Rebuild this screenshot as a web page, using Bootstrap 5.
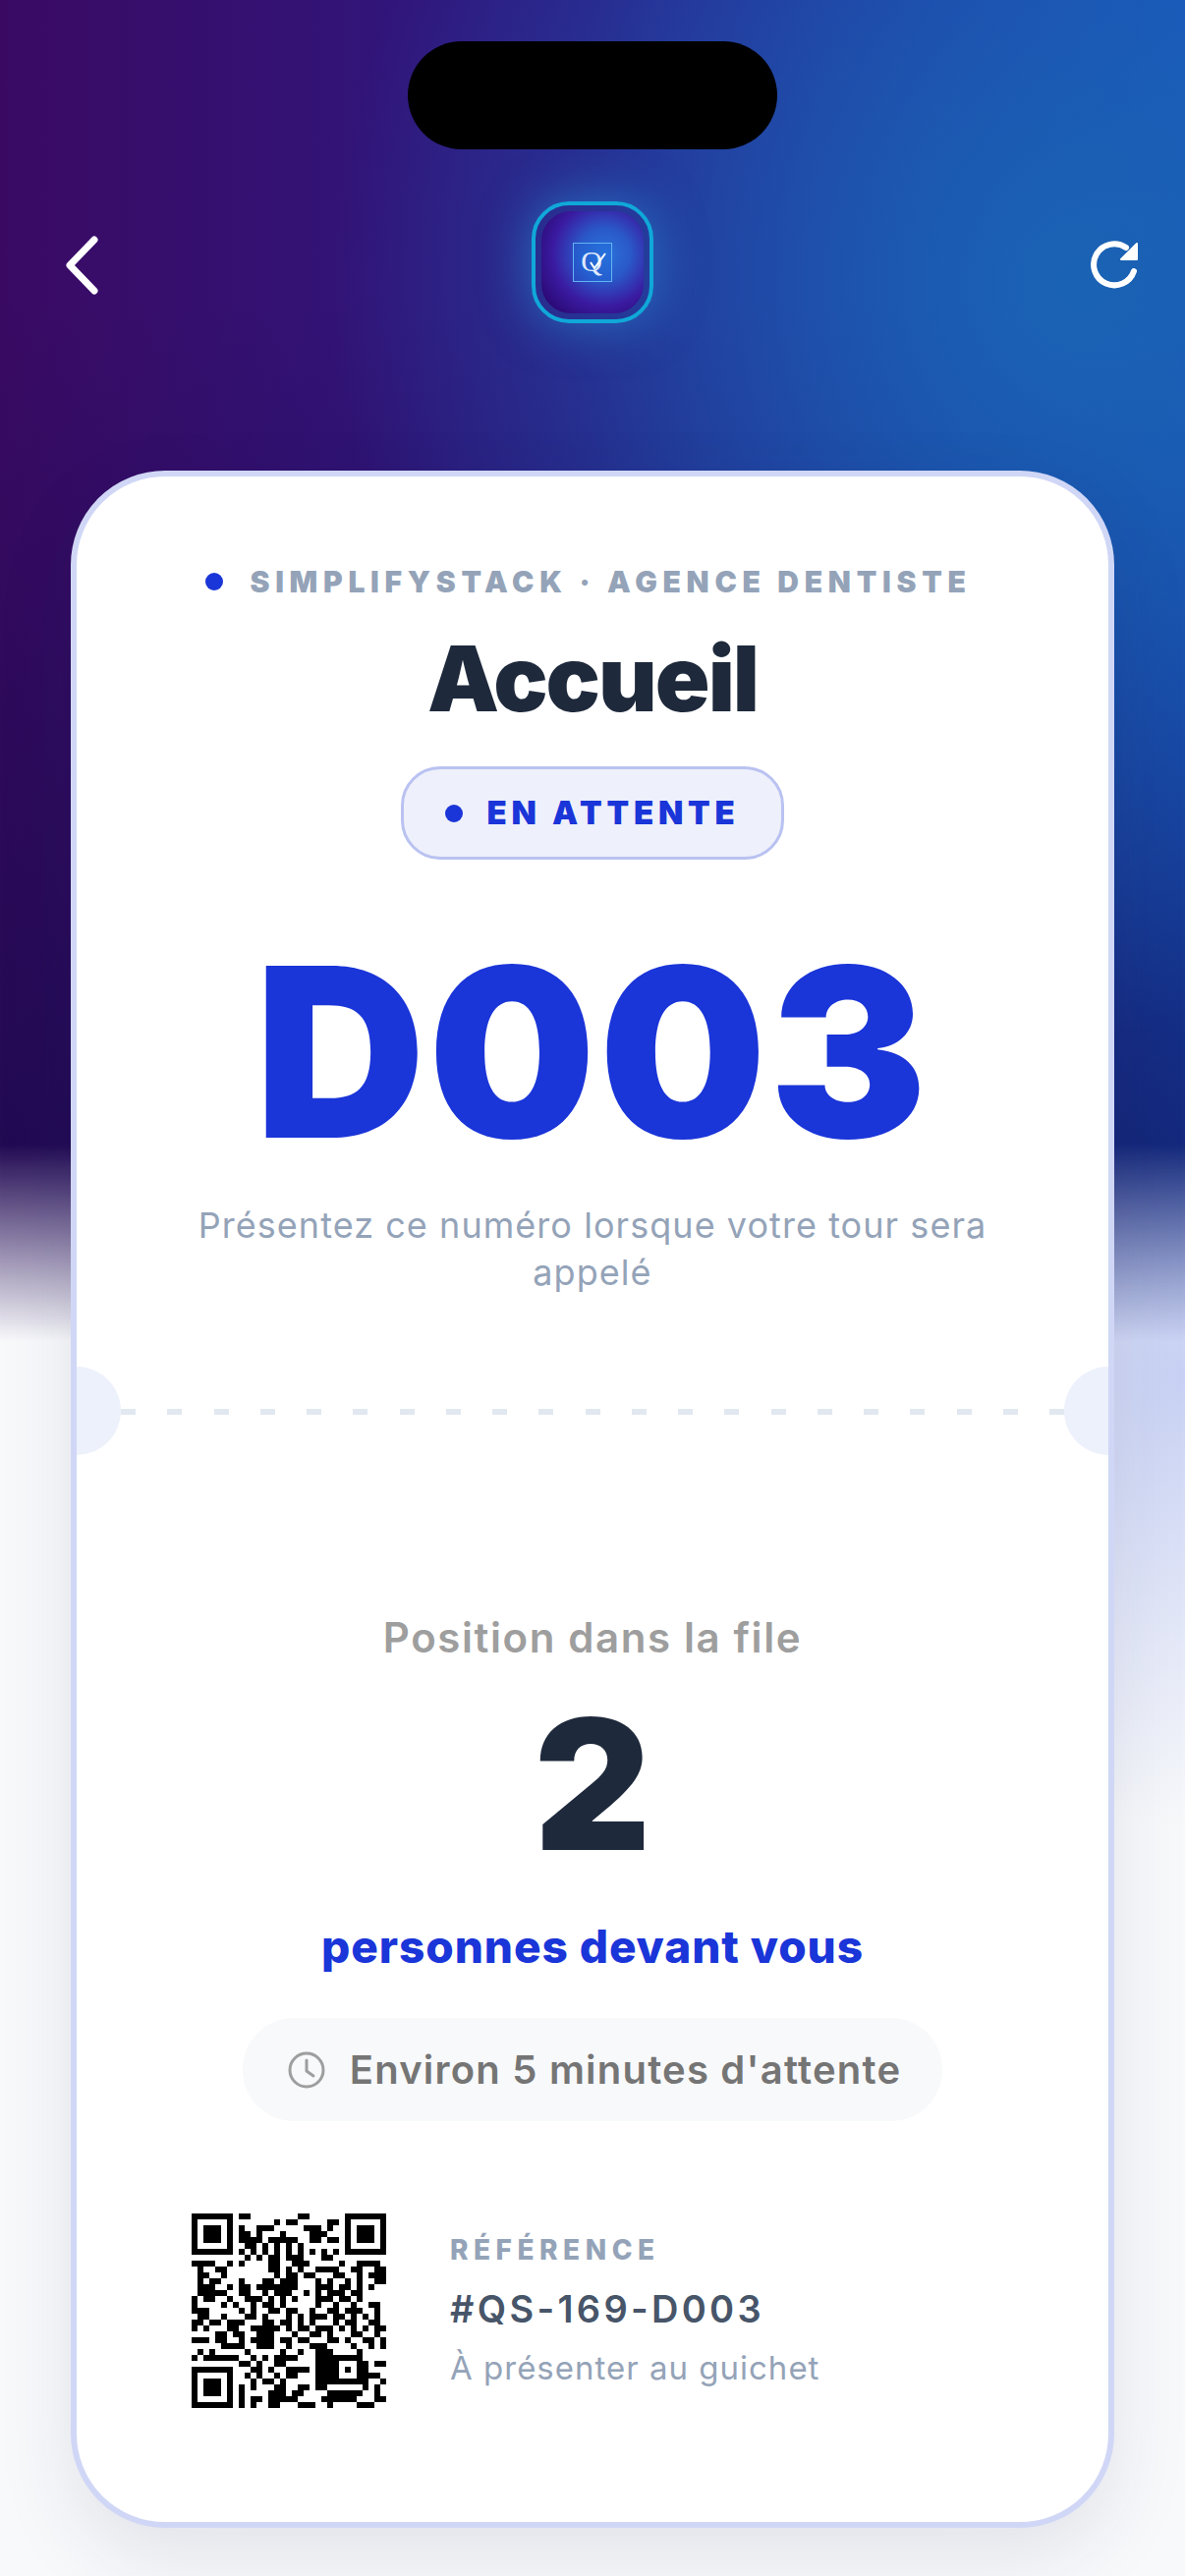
<!DOCTYPE html>
<html lang="fr">
<head>
    <meta charset="UTF-8">
    <meta name="viewport" content="width=device-width, initial-scale=1.0">
    <title>Ticket D003</title>
    <link href="https://cdn.jsdelivr.net/npm/bootstrap@5.3.0/dist/css/bootstrap.min.css" rel="stylesheet">
    <style>
        body {
            font-family: Inter, "Liberation Sans", sans-serif;
            background: radial-gradient(ellipse 420px 460px at 1206px 1400px, #c8d1f4, rgba(200,209,244,0)), #f8f9fb;
            min-height: 100vh;
            overflow: hidden;
        }
        .hero-bg {
            position: absolute;
            inset: 0 0 auto 0;
            height: 1380px;
            background:
                radial-gradient(circle 760px at 1100px 290px, #1a63b4 0, rgba(26,99,180,.55) 45%, rgba(26,99,180,0) 100%),
                linear-gradient(180deg, rgba(15,10,70,0) 300px, rgba(15,10,70,.55) 1160px),
                linear-gradient(90deg, #3a0a63 0, #2d1a85 50%, #1a50c0 100%);
            -webkit-mask-image: linear-gradient(#000 1165px, transparent 1365px);
            mask-image: linear-gradient(#000 1165px, transparent 1365px);
        }
        .page-wrap { position: relative; padding: 42px 72px 0; }
        .island { width: 376px; height: 110px; border-radius: 55px; background: #000; margin: 0 auto 53px; }
        .top-row { height: 124px; margin: 0 -72px 150px; padding: 0 45px; }
        .logo-ring {
            width: 124px; height: 124px; padding: 6px;
            border: 4px solid #10a8d8; border-radius: 38px;
            box-shadow: 0 0 50px rgba(40,170,235,.5);
        }
        .logo-tile {
            width: 104px; height: 104px; border-radius: 30px;
            background: radial-gradient(circle at 62% 42%, #2b74dc 0, #2a58c8 30%, #3a1aa0 60%, #2c0a78 85%);
        }
        .logo-box { width: 40px; height: 40px; border: 1px solid #62b4f5; background: rgba(30,110,220,.35); }
        .ticket {
            position: relative;
            height: 2094px;
            border: 6px solid #d0d7f6;
            border-radius: 96px;
            background: #fff;
            box-shadow: 0 30px 80px rgba(30,40,80,.1);
            overflow: hidden;
            padding-top: 87px;
        }
        .eyebrow { font-size: 30px; line-height: 40px; font-weight: 900; letter-spacing: 5.72px; color: #94a3b8; gap: 27px; margin-right: 8px; }
        .dot-blue { width: 18px; height: 18px; border-radius: 50%; background: #1a35d8; }
        .ticket-title { font-size: 92px; line-height: 110px; font-weight: 900; letter-spacing: -2px; color: #1e293b; margin: 24px 0 34px; }
        .state-pill { width: 390px; height: 95px; border: 3px solid #b9c2f1; border-radius: 40px; background: #eef0fb; color: #1a35d8; font-size: 33px; font-weight: 900; letter-spacing: 4.8px; gap: 24px; }
        .ticket-num { font-size: 240px; line-height: 260px; font-weight: 900; letter-spacing: 3px; color: #1a35d8; margin: 66px 0 0; }
        .hint { font-size: 36px; line-height: 48px; letter-spacing: 1.05px; color: #94a3b8; margin: 22px 0 0; width: 860px; }
        .tear { height: 6px; margin: 115px 45px 0; background: repeating-linear-gradient(90deg, #e2e8f0 0 15px, transparent 15px 47.25px); }
        .notch { position: absolute; top: 906px; width: 90px; height: 90px; border-radius: 50%; background: #edf1fb; }
        .notch-l { left: -45px; }
        .notch-r { right: -45px; }
        .pos-label { font-size: 42px; line-height: 48px; font-weight: 600; letter-spacing: 1.6px; color: #9e9e9e; margin: 203px 0 0; }
        .pos-num { font-size: 184px; line-height: 200px; font-weight: 900; color: #1e293b; margin: 25px 0 0; }
        .pos-sub { font-size: 46px; line-height: 56px; font-weight: 800; letter-spacing: .9px; color: #1a35d8; margin: 37px 0 0; }
        .wait-pill { width: 712px; height: 105px; border-radius: 52px; background: #f8f9fb; color: #757575; font-size: 40px; font-weight: 600; letter-spacing: 1.2px; margin-top: 45px; gap: 25px; padding-left: 4px; }
        .ref-row { margin: 94px 0 0 117px; gap: 65px; }
        .qr-box { width: 198px; height: 198px; display: block; }
        .ref-cap { font-size: 28px; line-height: 32px; font-weight: 800; letter-spacing: 5.5px; color: #94a3b8; }
        .ref-code { font-size: 38px; line-height: 48px; font-weight: 600; letter-spacing: 3.3px; color: #475569; margin-top: 20px; }
        .ref-note { font-size: 33px; line-height: 40px; letter-spacing: 1px; color: #94a3b8; margin-top: 16px; }
    </style>
</head>
<body>
    <div class="hero-bg"></div>
    <div class="page-wrap">
        <div class="island"></div>

        <div class="top-row d-flex justify-content-between align-items-center">
            <svg width="56" height="72" viewBox="0 0 56 72" fill="none" stroke="#fff" stroke-width="7" stroke-linecap="round" stroke-linejoin="round">
                <polyline points="51,13 26,39 51,65"/>
            </svg>
            <div class="logo-ring">
                <div class="logo-tile d-flex align-items-center justify-content-center">
                    <div class="logo-box d-flex align-items-center justify-content-center">
                        <svg width="34" height="34" viewBox="0 0 34 34">
                            <text x="16" y="26" text-anchor="middle" font-family="Liberation Serif, serif" font-size="30" fill="#dfeaff">Q</text>
                            <path d="M15 17 L19 23 L30 8" fill="none" stroke="#fff" stroke-width="2"/>
                        </svg>
                    </div>
                </div>
            </div>
            <svg width="56" height="62" viewBox="0 -6 56 62" fill="none">
                <path d="M41 10 A21 21 0 1 0 49 34" stroke="#fff" stroke-width="6" stroke-linecap="round"/>
                <polygon points="52,6 52,22 36,22" fill="#fff" stroke="#fff" stroke-width="2" stroke-linejoin="round"/>
            </svg>
        </div>

        <div class="ticket">
            <div class="notch notch-l"></div>
            <div class="notch notch-r"></div>

            <div class="d-flex flex-column align-items-center text-center">
                <div class="eyebrow d-flex align-items-center">
                    <span class="dot-blue"></span>
                    <span>SIMPLIFYSTACK · AGENCE DENTISTE</span>
                </div>
                <h1 class="ticket-title">Accueil</h1>
                <div class="state-pill d-flex align-items-center justify-content-center">
                    <span class="dot-blue"></span>
                    <span>EN ATTENTE</span>
                </div>
                <p class="ticket-num">D003</p>
                <p class="hint">Présentez ce numéro lorsque votre tour sera appelé</p>
            </div>

            <div class="tear"></div>

            <div class="d-flex flex-column align-items-center text-center">
                <p class="pos-label">Position dans la file</p>
                <p class="pos-num">2</p>
                <p class="pos-sub">personnes devant vous</p>
                <div class="wait-pill d-flex align-items-center justify-content-center">
                    <svg width="38" height="38" viewBox="0 0 38 38" fill="none" stroke="#9e9e9e" stroke-width="3" stroke-linecap="round" stroke-linejoin="round">
                        <circle cx="19" cy="19" r="17"/>
                        <polyline points="19,9 19,20 26,25"/>
                    </svg>
                    <span>Environ 5 minutes d'attente</span>
                </div>
            </div>

            <div class="ref-row d-flex align-items-center">
                <svg class="qr-box" id="qr" viewBox="0 0 33 33" shape-rendering="crispEdges"><path id="qrPath" fill="#000"/></svg>
                <div>
                    <div class="ref-cap">RÉFÉRENCE</div>
                    <div class="ref-code">#QS-169-D003</div>
                    <div class="ref-note">À présenter au guichet</div>
                </div>
            </div>
        </div>
    </div>

    <script src="https://cdn.jsdelivr.net/npm/bootstrap@5.3.0/dist/js/bootstrap.bundle.min.js"></script>
    <script>
        // modules du QR, ligne par ligne
        const qrRows = [
            "1111111 0 11000000001100000 0 1111111",
            "1000001 0 00000010110000011 0 1000001",
            "1011101 0 10011100000111010 0 1011101",
            "1011101 0 11010001000011100 0 1011101",
            "1011101 0 11110111110011011 0 1011101",
            "1000001 0 01101010101000000 0 1000001",
            "1111111 0 10101010101010101 0 1111111",
            "0000000 0 01010110111000110 0 0000000",
            "1111001 0 1000011 00111 00000 1 0011110",
            "0100110 0 0000011 01010 01111 0 0110011",
            "0110010 0 0000001 01101 10001 1 0010111",
            "0101100 0 1000110 11100 01010 0 1010011",
            "0111001 0 1101111 11100 01110 1 1010100",
            "0111110 0 1100101 11001 01011 1 0110000",
            "1011001 0 0111010 10100 01110 1 1010000",
            "1000010 1 0010110 10000 01001 0 0100110",
            "1110000 0 1010011 01100 10011 0 1110010",
            "0110010 0 0110100 01010 11101 1 0101010",
            "1101101 1 1000110 11010 10001 0 1100110",
            "1010001 1 0011111 01011 01110 1 0101011",
            "0000110 1 1001110 00100 11010 0 0110010",
            "1110110 0 1011110 11011 00011 0 1001101",
            "0000011 1 1001110 01000 11100 0 0100101",
            "0101000 0 0100000 10010 01110 0 0010000",
            "1011111 1 0010101 11100 01111 1 1110000",
            "0000000 0 1101001 10000 01111 0 0011011",
            "1111111 0 0011010 01111 01111 0 1011000",
            "1000001 0 0101001 01100 01111 0 0011110",
            "1011101 0 0010110 10000 01111 1 1111001",
            "1011101 0 1010001 10011 01100 0 0001010",
            "1011101 0 1000011 10110 00011 1 1110010",
            "1000001 0 1011011 11100 00111 1 1100011",
            "1111111 0 1010011 00011 10010 0 0011100"
        ];
        let d = "";
        qrRows.forEach((row, y) => {
            row.replace(/ /g, "").split("").forEach((c, x) => {
                if (c === "1") d += "M" + x + " " + y + "h1v1h-1z";
            });
        });
        document.getElementById("qrPath").setAttribute("d", d);
    </script>
</body>
</html>
